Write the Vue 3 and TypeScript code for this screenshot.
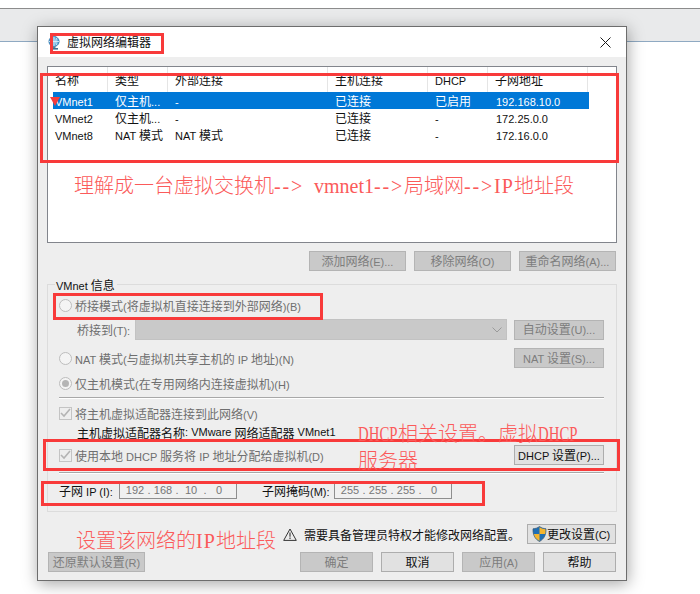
<script setup lang="ts">
import { h } from 'vue'

interface NetRow { name: string; type: string; ext: string; host: string; dhcp: string; subnet: string; selected?: boolean }

// The dialog's Latin runs are set smaller than its Chinese runs, so mixed strings are split per script.
const Mixed = (props: { t: string }) =>
  (props.t.match(/[\x20-\x7e]+|[^\x20-\x7e]+/g) ?? []).map((run) =>
    /^[\x20-\x7e]/.test(run) ? h('span', { class: 'lat' }, run) : h('span', run),
  )
Mixed.props = ['t']

const columns = [
  { label: '名称', w: 60 }, { label: '类型', w: 60 }, { label: '外部连接', w: 160 },
  { label: '主机连接', w: 100 }, { label: 'DHCP', w: 60 }, { label: '子网地址', w: 100 },
]
const rows: NetRow[] = [
  { name: 'VMnet1', type: '仅主机...', ext: '-', host: '已连接', dhcp: '已启用', subnet: '192.168.10.0', selected: true },
  { name: 'VMnet2', type: '仅主机...', ext: '-', host: '已连接', dhcp: '-', subnet: '172.25.0.0' },
  { name: 'VMnet8', type: 'NAT 模式', ext: 'NAT 模式', host: '已连接', dhcp: '-', subnet: '172.16.0.0' },
]
const listActions = ['添加网络(E)...', '移除网络(O)', '重命名网络(A)...']
const ipOctets = ['192', '168', '10', '0']
const maskOctets = ['255', '255', '255', '0']
</script>

<template>
  <div class="page">
    <div class="backdrop"></div>
    <div class="dialog">
      <header class="titlebar">
        <svg class="appicon" width="13" height="14" viewBox="0 0 13 14">
          <circle cx="6" cy="5.5" r="5" fill="#6db3e0" stroke="#2c78b0" stroke-width="1" />
          <path d="M1 5.500h10M6 .5v10M3 1.800c1.600 2.400 1.600 5 0 7.400M9 1.800c-1.600 2.400-1.600 5 0 7.400" fill="none" stroke="#e8f4fb" stroke-width=".8" />
          <rect x="4.500" y="10.500" width="3" height="1.600" fill="#5c7f96" />
          <rect x="2" y="12" width="8" height="1.600" fill="#3f6f92" />
        </svg>
        <span class="title">虚拟网络编辑器</span>
        <svg class="close" width="11" height="11" viewBox="0 0 11 11">
          <path d="M.5.5l10 10M10.500.5l-10 10" stroke="#1a1a1a" stroke-width="1" fill="none" />
        </svg>
      </header>

      <main class="body">
        <section class="list">
          <div class="thead">
            <div v-for="c in columns" :key="c.label" class="th" :style="{ width: c.w + 'px' }"><Mixed :t="c.label" /></div>
          </div>
          <div v-for="r in rows" :key="r.name" class="tr" :class="{ selected: r.selected }">
            <div class="td c1"><Mixed :t="r.name" /></div>
            <div class="td c2"><Mixed :t="r.type" /></div>
            <div class="td c3"><Mixed :t="r.ext" /></div>
            <div class="td c4"><Mixed :t="r.host" /></div>
            <div class="td c5"><Mixed :t="r.dhcp" /></div>
            <div class="td c6"><Mixed :t="r.subnet" /></div>
          </div>
        </section>

        <div class="list-actions">
          <button v-for="a in listActions" :key="a" class="btn wide" disabled><Mixed :t="a" /></button>
        </div>

        <section class="group">
          <span class="legend"><Mixed t="VMnet 信息" /></span>

          <div class="row r-bridge">
            <span class="radio"></span><span class="dim"><Mixed t="桥接模式(将虚拟机直接连接到外部网络)(B)" /></span>
          </div>
          <div class="row r-bridgeto">
            <span class="dim bridge-label"><Mixed t="桥接到(T):" /></span>
            <span class="select">
              <svg width="10" height="6" viewBox="0 0 10 6"><path d="M.5.500L5 5 9.500.500" fill="none" stroke="#9a9a9a" /></svg>
            </span>
            <button class="btn side" disabled><Mixed t="自动设置(U)..." /></button>
          </div>
          <div class="row r-nat">
            <span class="radio"></span><span class="dim"><Mixed t="NAT 模式(与虚拟机共享主机的 IP 地址)(N)" /></span>
            <button class="btn side" disabled><Mixed t="NAT 设置(S)..." /></button>
          </div>
          <div class="row r-host">
            <span class="radio on"></span><span class="dim"><Mixed t="仅主机模式(在专用网络内连接虚拟机)(H)" /></span>
          </div>
          <div class="sep s1"></div>
          <div class="row r-check">
            <span class="check">
              <svg width="11" height="10" viewBox="0 0 11 10"><path d="M1 5l3 3 6-7" fill="none" stroke="#b4b4b4" stroke-width="1.600" /></svg>
            </span>
            <span class="dim"><Mixed t="将主机虚拟适配器连接到此网络(V)" /></span>
          </div>
          <div class="row r-name"><Mixed t="主机虚拟适配器名称: VMware 网络适配器 VMnet1" /></div>
          <div class="row r-dhcp">
            <span class="check">
              <svg width="11" height="10" viewBox="0 0 11 10"><path d="M1 5l3 3 6-7" fill="none" stroke="#b4b4b4" stroke-width="1.600" /></svg>
            </span>
            <span class="dim"><Mixed t="使用本地 DHCP 服务将 IP 地址分配给虚拟机(D)" /></span>
            <button class="btn side active"><Mixed t="DHCP 设置(P)..." /></button>
          </div>
          <div class="sep s2"></div>
          <div class="row r-subnet">
            <span class="ip-label"><Mixed t="子网 IP (I):" /></span>
            <span class="ip">
              <template v-for="(o, i) in ipOctets" :key="i">
                <span class="octet lat">{{ o }}</span><span v-if="i < 3" class="dot lat">.</span>
              </template>
            </span>
            <span class="ip-label mask-label"><Mixed t="子网掩码(M):" /></span>
            <span class="ip">
              <template v-for="(o, i) in maskOctets" :key="i">
                <span class="octet lat">{{ o }}</span><span v-if="i < 3" class="dot lat">.</span>
              </template>
            </span>
          </div>
        </section>

        <div class="warn-row">
          <svg width="14" height="13" viewBox="0 0 14 13">
            <path d="M7 1L13.300 12.400H.7z" fill="none" stroke="#333" stroke-width="1" />
            <path d="M7 4.500v4.200M7 9.600v1.300" stroke="#333" stroke-width="1.100" />
          </svg>
          <span class="warn-text">需要具备管理员特权才能修改网络配置。</span>
          <button class="btn shield active">
            <svg width="15" height="16" viewBox="0 0 15 16">
              <path d="M7.500.5C9.500 2 11.500 2.600 14 2.800c.2 5.600-1.600 10-6.500 12.700C2.600 12.800.8 8.400 1 2.800 3.500 2.600 5.500 2 7.500.5z" fill="#1f6fb5" stroke="#33536e" stroke-width=".7" />
              <path d="M7.500 1.200C9.400 2.400 11.400 3 13.500 3.200 13.600 4.900 13.500 6.500 13.200 8H7.500z" fill="#f5b52e" />
              <path d="M1.800 8C2.500 10.900 4.300 13.300 7.500 14.900V8z" fill="#f5b52e" />
            </svg>
            <span><Mixed t="更改设置(C)" /></span>
          </button>
        </div>

        <footer class="footer">
          <button class="btn wide" disabled><Mixed t="还原默认设置(R)" /></button>
          <span class="spacer"></span>
          <button class="btn foot" disabled>确定</button>
          <button class="btn foot active">取消</button>
          <button class="btn foot" disabled><Mixed t="应用(A)" /></button>
          <button class="btn foot active">帮助</button>
        </footer>
      </main>

      <!-- hand-drawn red annotations lying over the dialog -->
      <i class="mark m-title"></i>
      <i class="mark m-list"></i>
      <i class="mark m-bridge"></i>
      <i class="mark m-dhcp"></i>
      <i class="mark m-subnet"></i>
      <i class="pin"></i>
      <p class="note n-switch">理解成一台虚拟交换机<b class="arrow">--&gt;</b><b class="gap"> </b><b>vmnet1</b><b class="arrow">--&gt;</b>局域网<b class="arrow">--&gt;</b><b class="ipx">IP</b>地址段</p>
      <p class="note n-dhcp"><b class="dh">DHCP</b>相关设置。虚拟<b class="dh">DHCP</b><br />服务器</p>
      <p class="note n-ip">设置该网络的<b class="ipx">IP</b>地址段</p>
    </div>
  </div>
</template>

<style>
html, body { margin: 0; background: #fff; }
.lat { font-family: "Liberation Sans", sans-serif; font-size: 11px; }
</style>

<style scoped>
.page {
  position: relative;
  width: 700px;
  height: 594px;
  overflow: hidden;
  background: #fff;
  font-family: "Noto Sans CJK SC", sans-serif;
  font-size: 12px;
  color: #111;
}
.backdrop {
  margin-top: 8px;
  height: 32px;
  background: #e9eaeb;
  border-top: 1px solid #8c8c8c;
  border-bottom: 1px solid #8fa9c2;
}
.dialog {
  position: absolute;
  left: 37px;
  top: 26px;
  width: 590px;
  height: 555px;
  box-sizing: border-box;
  border: 1px solid #6d6d6d;
  background: #eeeeee;
  box-shadow: 1px 3px 15px rgba(0, 0, 0, 0.35);
}
.titlebar {
  display: flex;
  align-items: center;
  height: 30px;
  background: #fff;
  padding: 0 15px 0 10px;
}
.appicon { margin-top: 1px; }
.title { margin-left: 6px; line-height: 16px; }
.close { margin-left: auto; }
.body { display: flex; flex-direction: column; padding: 9px 9px 0; }

.list {
  height: 177px;
  box-sizing: border-box;
  background: #fff;
  border: 1px solid #82858c;
  flex: none;
}
.thead { display: flex; height: 25px; }
.th {
  box-sizing: border-box;
  padding: 5px 0 0 7px;
  line-height: 16px;
  border-right: 1px solid #e5e5e5;
}
.tr {
  display: flex;
  height: 17px;
  line-height: 17px;
  width: 536px;
  margin-left: 5px;
}
.tr.selected { background: #0078d7; color: #fff; }
.td { box-sizing: border-box; white-space: nowrap; overflow: hidden; padding-left: 2px; }
.c1 { width: 60px; }
.c2 { width: 60px; }
.c3 { width: 160px; }
.c4 { width: 100px; }
.c5 { width: 60px; }
.c6 { width: 76px; padding-left: 3px; }

.btn {
  box-sizing: border-box;
  height: 20px;
  padding: 0;
  border: 1px solid #b4b4b4;
  background: #c9c9c9;
  color: #7d7d7d;
  font: inherit;
  line-height: 16px;
  white-space: nowrap;
  flex: none;
}
.btn.active { background: #e1e1e1; border-color: #adadad; color: #111; }
.btn.wide { width: 97px; }
.btn.side { width: 90px; margin-left: auto; }
.btn.foot { width: 73px; margin-left: 8px; }

.list-actions {
  display: flex;
  justify-content: flex-end;
  gap: 8px;
  margin-top: 8px;
  padding-right: 1px;
}

.group {
  position: relative;
  box-sizing: border-box;
  height: 228px;
  margin-top: 13px;
  padding: 0 12px 0 11px;
  border: 1px solid #dcdcdc;
}
.legend {
  position: absolute;
  left: 7px;
  top: -8px;
  padding: 0 2px 0 1px;
  background: #eeeeee;
  line-height: 16px;
}
.row { display: flex; align-items: center; height: 20px; }
.dim { color: #6f6f6f; white-space: nowrap; }
.radio {
  box-sizing: border-box;
  width: 13px;
  height: 13px;
  border: 1px solid #bdbdbd;
  border-radius: 50%;
  background: #f4f4f4;
  margin-right: 3px;
  position: relative;
  flex: none;
}
.radio.on::after {
  content: "";
  position: absolute;
  left: 2px;
  top: 2px;
  width: 7px;
  height: 7px;
  border-radius: 50%;
  background: #b5b5b5;
}
.check {
  box-sizing: border-box;
  display: flex;
  align-items: center;
  justify-content: center;
  width: 13px;
  height: 13px;
  border: 1px solid #c4c4c4;
  background: #eeeeee;
  margin-right: 3px;
  flex: none;
}
.r-bridge { margin-top: 10px; }
.r-bridgeto { margin-top: 4px; height: 21px; }
.bridge-label { margin-left: 18px; width: 58px; }
.select {
  box-sizing: border-box;
  width: 372px;
  height: 21px;
  background: #c9c9c9;
  border: 1px solid #c2c2c2;
  display: flex;
  align-items: center;
  justify-content: flex-end;
  padding-right: 4px;
}
.r-nat { margin-top: 8px; }
.r-host { margin-top: 5px; }
.sep { height: 1px; background: #a8a8a8; border-bottom: 1px solid #fff; }
.s1 { margin-top: 4px; }
.r-check { margin-top: 4px; }
.r-name { height: 18px; padding-left: 18px; white-space: pre; }
.r-dhcp { margin-top: 4px; }
.s2 { margin-top: 7px; }
.r-subnet { margin-top: 8px; height: 17px; }
.ip-label { white-space: pre; width: 60px; }
.mask-label { width: 72px; margin-left: 25px; }
.ip {
  box-sizing: border-box;
  width: 118px;
  height: 17px;
  background: #f0f0f0;
  border: 1px solid #8e8e8e;
  border-top-color: #b5b5b5;
  display: flex;
  padding-left: 4px;
  line-height: 15px;
}
.octet { width: 22px; text-align: center; color: #777; }
.dot { width: 6px; text-align: center; color: #777; }

.warn-row {
  display: flex;
  align-items: center;
  justify-content: flex-end;
  margin-top: 12px;
  height: 20px;
  padding-right: 1px;
}
.warn-text { margin-left: 7px; white-space: nowrap; }
.btn.shield {
  display: flex;
  align-items: center;
  width: 89px;
  margin-left: 7px;
  padding-left: 4px;
}
.footer { display: flex; margin-top: 8px; padding: 0 1px; }
.spacer { flex: 1; }

/* annotations */
.mark { position: absolute; box-sizing: border-box; border: 3px solid #f83a3a; }
.m-title { left: 12px; top: 6px; width: 114px; height: 21px; }
.m-list { left: 2px; top: 46px; width: 579px; height: 90px; }
.m-bridge { left: 15px; top: 266px; width: 270px; height: 27px; }
.m-dhcp { left: 5px; top: 412px; width: 577px; height: 32px; }
.m-subnet { left: 3px; top: 454px; width: 444px; height: 25px; }
.pin {
  position: absolute;
  left: 12px;
  top: 70px;
  width: 0;
  height: 0;
  border-left: 5px solid transparent;
  border-right: 5px solid transparent;
  border-top: 9px solid #f53c3c;
}
.note {
  position: absolute;
  margin: 0;
  font-family: "Noto Sans CJK SC", sans-serif;
  font-size: 20px;
  font-weight: 300;
  line-height: 25px;
  color: #fb5a5a;
  white-space: nowrap;
}
.note b {
  font-family: "Liberation Serif", serif;
  font-size: 20px;
  font-weight: 400;
  white-space: pre;
}
.note b.arrow { display: inline-block; width: 30px; letter-spacing: 1.8px; }
.note b.gap { display: inline-block; width: 10px; }
.note b.ipx { display: inline-block; width: 20px; letter-spacing: 1.1px; }
.note b.dh { display: inline-block; width: 40px; transform: scaleX(0.74); transform-origin: left center; }
.n-switch { left: 36px; top: 145px; }
.n-dhcp { left: 320px; top: 393px; }
.n-ip { left: 38px; top: 500px; }
</style>
